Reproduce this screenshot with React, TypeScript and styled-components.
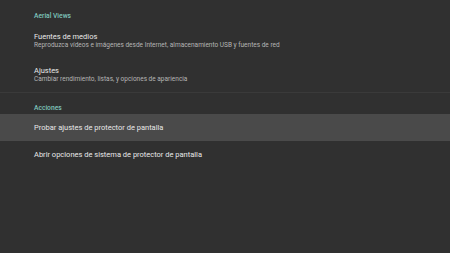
import React from 'react';
import styled, { createGlobalStyle } from 'styled-components';

const GlobalStyle = createGlobalStyle`
  html, body {
    margin: 0;
    padding: 0;
    background: #303030;
  }
  body {
    font-family: Roboto, "Noto Sans", sans-serif;
  }
`;

const Screen = styled.div`
  width: 450px;
  height: 253px;
  background: #303030;
  overflow: hidden;
  display: flex;
  flex-direction: column;
`;

const Section = styled.section<{ $divider?: boolean }>`
  display: flex;
  flex-direction: column;
  border-bottom: ${({ $divider }) => ($divider ? '1px solid #3a3a3a' : 'none')};
`;

const Header = styled.div<{ $top: number; $height: number }>`
  box-sizing: border-box;
  padding: ${({ $top }) => $top}px 34px 0;
  height: ${({ $height }) => $height}px;
  line-height: 10px;
  font-size: 6.7px;
  font-weight: 500;
  color: #7fc4bb;
`;

const Item = styled.div<{ $focused?: boolean; $tall?: boolean }>`
  display: flex;
  flex-direction: column;
  justify-content: center;
  padding: 0 34px;
  height: ${({ $tall }) => ($tall ? '34px' : '27px')};
  background: ${({ $focused }) => ($focused ? '#4a4a4a' : 'transparent')};
`;

const ItemTitle = styled.div`
  font-size: 7.5px;
  line-height: 9px;
  color: #e8e8e8;
`;

const ItemSubtitle = styled.div`
  font-size: 6.5px;
  line-height: 9px;
  color: #b5b5b5;
`;

const App: React.FC = () => {
  return (
    <Screen>
      <GlobalStyle />
      <Section $divider>
        <Header $top={11} $height={24}>Aerial Views</Header>
        <Item $tall>
          <ItemTitle>Fuentes de medios</ItemTitle>
          <ItemSubtitle>Reproduzca vídeos e imágenes desde Internet, almacenamiento USB y fuentes de red</ItemSubtitle>
        </Item>
        <Item $tall>
          <ItemTitle>Ajustes</ItemTitle>
          <ItemSubtitle>Cambiar rendimiento, listas, y opciones de apariencia</ItemSubtitle>
        </Item>
      </Section>
      <Section>
        <Header $top={10} $height={21}>Acciones</Header>
        <Item $focused>
          <ItemTitle>Probar ajustes de protector de pantalla</ItemTitle>
        </Item>
        <Item>
          <ItemTitle>Abrir opciones de sistema de protector de pantalla</ItemTitle>
        </Item>
      </Section>
    </Screen>
  );
};

export default App;
